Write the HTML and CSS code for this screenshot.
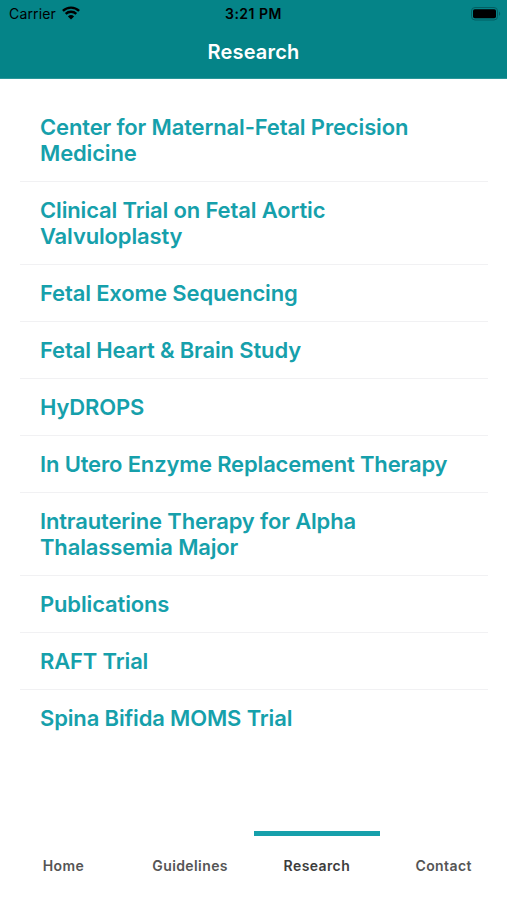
FILE: index.html
```
<!DOCTYPE html>
<html lang="en">
<head>
    <meta charset="UTF-8">
    <meta name="viewport" content="width=device-width, initial-scale=1.0">
    <title>Research</title>
    <link rel="stylesheet" href="styles.css">
</head>
<body>
    <header class="header">
        <div class="status-bar">
            <div class="carrier">
                <span class="carrier-name">Carrier</span>
                <svg class="wifi" width="18" height="14" viewBox="0 0 18 14">
                    <path d="M0.9 4.9a11.6 11.6 0 0 1 16.2 0M3.7 7.9a7.6 7.6 0 0 1 10.6 0" fill="none" stroke="#000" stroke-width="2.4"/>
                    <path d="M9 13.6L5.9 10.5a4.5 4.5 0 0 1 6.2 0z"/>
                </svg>
            </div>
            <span class="time">3:21 PM</span>
            <svg class="battery" width="31" height="14" viewBox="0 0 31 14">
                <rect x="0.5" y="0.5" width="26" height="12.5" rx="3.5" fill="none" stroke="#035f62"/>
                <rect x="2" y="2.3" width="23" height="8.9" rx="1.8"/>
                <path d="M28 4.5q2.4 2.2 0 4.5z" fill="#035f62"/>
            </svg>
        </div>
        <h1 class="title">Research</h1>
    </header>

    <main class="content">
        <ul class="list">
            <li><a href="#">Center for Maternal-Fetal Precision<br>Medicine</a></li>
            <li><a href="#">Clinical Trial on Fetal Aortic<br>Valvuloplasty</a></li>
            <li><a href="#">Fetal Exome Sequencing</a></li>
            <li><a href="#">Fetal Heart &amp; Brain Study</a></li>
            <li><a href="#">HyDROPS</a></li>
            <li><a href="#">In Utero Enzyme Replacement Therapy</a></li>
            <li><a href="#">Intrauterine Therapy for Alpha<br>Thalassemia Major</a></li>
            <li><a href="#">Publications</a></li>
            <li><a href="#">RAFT Trial</a></li>
            <li><a href="#">Spina Bifida MOMS Trial</a></li>
        </ul>
    </main>

    <nav class="tabs">
        <a href="#">Home</a>
        <a href="#">Guidelines</a>
        <a href="#" class="active">Research</a>
        <a href="#">Contact</a>
    </nav>
</body>
</html>
```
FILE: styles.css
```
* {
    box-sizing: border-box;
}
body {
    display: flex;
    flex-direction: column;
    height: 900px;
    margin: 0;
    background-color: #fff;
    font-family: Inter, "Liberation Sans", sans-serif;
}
a {
    color: inherit;
    text-decoration: none;
}
.header {
    height: 79px;
    background-color: #058488;
    border-bottom: 1px solid #2b9699;
}
.status-bar {
    display: grid;
    grid-template-columns: 1fr auto 1fr;
    align-items: center;
    height: 27px;
    padding: 0 5px 0 9px;
    font-size: 14px;
}
.carrier {
    display: flex;
    align-items: center;
    gap: 6px;
}
.carrier-name {
    letter-spacing: 0.15px;
}
.wifi {
    margin-top: -2px;
}
.time {
    font-weight: 600;
    letter-spacing: 0.5px;
    margin-right: 4px;
}
.battery {
    justify-self: end;
}
.title {
    margin: 0;
    color: #fff;
    font-size: 20px;
    font-weight: 600;
    letter-spacing: 0.2px;
    line-height: 51px;
    text-align: center;
}
.content {
    flex: 1;
    padding: 20px 19px 0 20px;
}
.list {
    margin: 0;
    padding: 0;
    list-style: none;
}
.list li {
    padding: 15px 20px;
    border-bottom: 1px solid #f1f1f3;
    color: #16a0ab;
    font-size: 22px;
    font-weight: 600;
    letter-spacing: -0.15px;
    line-height: 26px;
    white-space: nowrap;
}
.list li:last-child {
    border-bottom: none;
}
.tabs {
    display: grid;
    grid-template-columns: repeat(4, 1fr);
    height: 69px;
    color: #555;
    font-size: 14px;
    font-weight: 600;
    letter-spacing: 0.4px;
    text-align: center;
}
.tabs a {
    border-top: 5px solid transparent;
    line-height: 60px;
}
.tabs .active {
    border-top-color: #16a0ab;
    color: #3c3c3c;
}
```
